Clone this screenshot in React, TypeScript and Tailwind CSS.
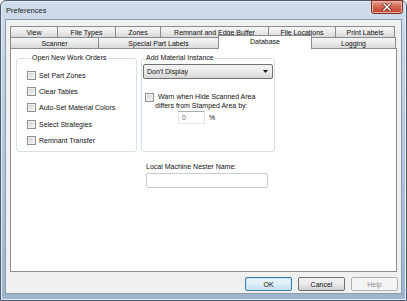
import React from "react";

const tabBase =
  "h-[11px] flex items-center justify-center border-l border-t border-[#898c95] bg-linear-to-b from-[#f4f4f4] via-[#ebebeb] to-[#d8d8d8] whitespace-nowrap";

const rowOne = [
  { label: "View", cls: "w-[47px]" },
  { label: "File Types", cls: "w-[58px]" },
  { label: "Zones", cls: "w-[45px]" },
  { label: "Remnant and Edge Buffer", cls: "w-[108px]" },
  { label: "File Locations", cls: "w-[67px]" },
  { label: "Print Labels", cls: "w-[60px] border-r" },
];

function CheckBox() {
  return (
    <span className="block w-[9px] h-[9px] shrink-0 border border-[#8e8f8f] bg-linear-to-br from-[#cfcfcf] to-[#f7f7f7] shadow-[inset_0_0_0_1px_#f2f2f2]" />
  );
}

function CheckRow({ label }: { label: string }) {
  return (
    <div className="flex items-center gap-[3px] h-[16.3px]">
      <CheckBox />
      <span>{label}</span>
    </div>
  );
}

function Button({ label, primary, disabled }: { label: string; primary?: boolean; disabled?: boolean }) {
  if (disabled) {
    return (
      <div className="w-[47px] h-[14px] flex items-center justify-center rounded-[2px] border border-[#adb2b5] bg-[#f4f4f4] text-[#8d8d8d]">
        {label}
      </div>
    );
  }
  return (
    <div
      className={
        primary
          ? "w-[47px] h-[14px] flex items-center justify-center rounded-[2px] border border-[#3c7fb1] bg-linear-to-b from-[#eaf6fd] via-[#e0eef8] to-[#c4dff1] shadow-[inset_0_0_0_1px_#bfe3f7]"
          : "w-[47px] h-[14px] flex items-center justify-center rounded-[2px] border border-[#707070] bg-linear-to-b from-[#f2f2f2] via-[#ebebeb] to-[#cfcfcf]"
      }
    >
      {label}
    </div>
  );
}

export default function App() {
  return (
    <div className="w-[407px] h-[301px] bg-white font-['Liberation_Sans',Arial,sans-serif] text-[7px] leading-[9px] text-[#111]">
      <div className="w-[407px] h-[301px] flex flex-col rounded-t-[6px] border border-[#4e5d70] bg-linear-to-b from-[#cfdcea] via-[#b4c7dc] to-[#9fb4cc] shadow-[inset_0_0_0_1px_#e3ecf5]">
        {/* title bar */}
        <div className="h-[18px] flex items-start justify-between pl-[5px] pr-[3px]">
          <span className="pt-[5px] text-[7.5px] text-[#1b1b1b]">Preferences</span>
          <div className="w-[32px] h-[14px] -mt-px flex items-center justify-center rounded-b-[3px] border border-[#7d2d24] bg-linear-to-b from-[#e9a899] via-[#d2634f] to-[#c1432f] shadow-[inset_0_0_0_1px_#eab2a4]">
            <svg width="10" height="8" viewBox="0 0 10 8">
              <path d="M2 1 L8 7 M8 1 L2 7" stroke="#5a1b14" strokeWidth="3" strokeLinecap="square" />
              <path d="M2 1 L8 7 M8 1 L2 7" stroke="#ffffff" strokeWidth="1.6" strokeLinecap="square" />
            </svg>
          </div>
        </div>

        {/* client area */}
        <div className="mx-[4px] h-[275px] border border-[#8a9bb0] bg-[#f0f0f0] pt-[6px] px-[4px] flex flex-col">
          {/* tab rows */}
          <div className="flex">
            {rowOne.map((t) => (
              <div key={t.label} className={`${tabBase} ${t.cls}`}>
                {t.label}
              </div>
            ))}
          </div>
          <div className="flex items-end h-[11px]">
            <div className={`${tabBase} w-[88px]`}>Scanner</div>
            <div className={`${tabBase} w-[120px]`}>Special Part Labels</div>
            <div className="relative z-10 w-[94px] h-[14px] -mb-px pb-[2px] flex items-center justify-center border-l border-t border-r border-[#898c95] bg-white">
              Database
            </div>
            <div className="h-[11px] w-[84px] flex items-center justify-center border-t border-r border-[#898c95] bg-linear-to-b from-[#f4f4f4] via-[#ebebeb] to-[#d8d8d8]">
              Logging
            </div>
          </div>

          {/* tab panel */}
          <div className="h-[224px] border border-[#898c95] bg-white pt-[5px] px-[5px]">
            <div className="grid grid-cols-[121px_134px] gap-x-[4px]">
              <fieldset className="h-[98px] border border-[#d5dfe5] rounded-[3px] pl-[10px] pt-[5px]">
                <legend className="ml-[4px] px-[1px] leading-[8px]">Open New Work Orders</legend>
                <CheckRow label="Set Part Zones" />
                <CheckRow label="Clear Tables" />
                <CheckRow label="Auto-Set Material Colors" />
                <CheckRow label="Select Strategies" />
                <CheckRow label="Remnant Transfer" />
              </fieldset>

              <fieldset className="h-[98px] border border-[#d5dfe5] rounded-[3px] px-[1px] pt-[2px]">
                <legend className="ml-[2px] px-[1px] leading-[8px]">Add Material Instance</legend>
                <div className="h-[15px] flex items-center justify-between pl-[3px] pr-[4px] rounded-[2px] border border-[#707070] bg-linear-to-b from-[#f2f2f2] via-[#ebebeb] to-[#d6d6d6]">
                  <span>Don't Display</span>
                  <svg width="5" height="3" viewBox="0 0 5 3">
                    <path d="M0 0 H5 L2.5 3 Z" fill="#111" />
                  </svg>
                </div>
                <div className="mt-[13px] pl-[2px] flex items-start gap-[3px]">
                  <div className="pt-px">
                    <CheckBox />
                  </div>
                  <div>
                    <div className="pl-[1px]">Warn when Hide Scanned Area</div>
                    <div className="-ml-[2px]">differs from Stamped Area by:</div>
                  </div>
                </div>
                <div className="mt-px pl-[35px] flex items-center gap-[4px]">
                  <div className="w-[27px] h-[13px] flex items-center pl-[3px] border border-[#abadb3] border-l-[#e2e3ea] border-r-[#dbdfe6] border-b-[#e3e9ef] bg-white text-[#6d6d6d]">
                    0
                  </div>
                  <span>%</span>
                </div>
              </fieldset>

              <div className="col-start-2 pl-[5px] mt-[10px]">
                <div>Local Machine Nester Name:</div>
                <div className="mt-[2px] w-[122px] h-[15px] rounded-[2px] border border-[#c5cbd2] bg-white" />
              </div>
            </div>
          </div>

          {/* buttons */}
          <div className="mt-[5px] -mr-px flex justify-end gap-[6px]">
            <Button label="OK" primary />
            <Button label="Cancel" />
            <Button label="Help" disabled />
          </div>
        </div>
      </div>
    </div>
  );
}
